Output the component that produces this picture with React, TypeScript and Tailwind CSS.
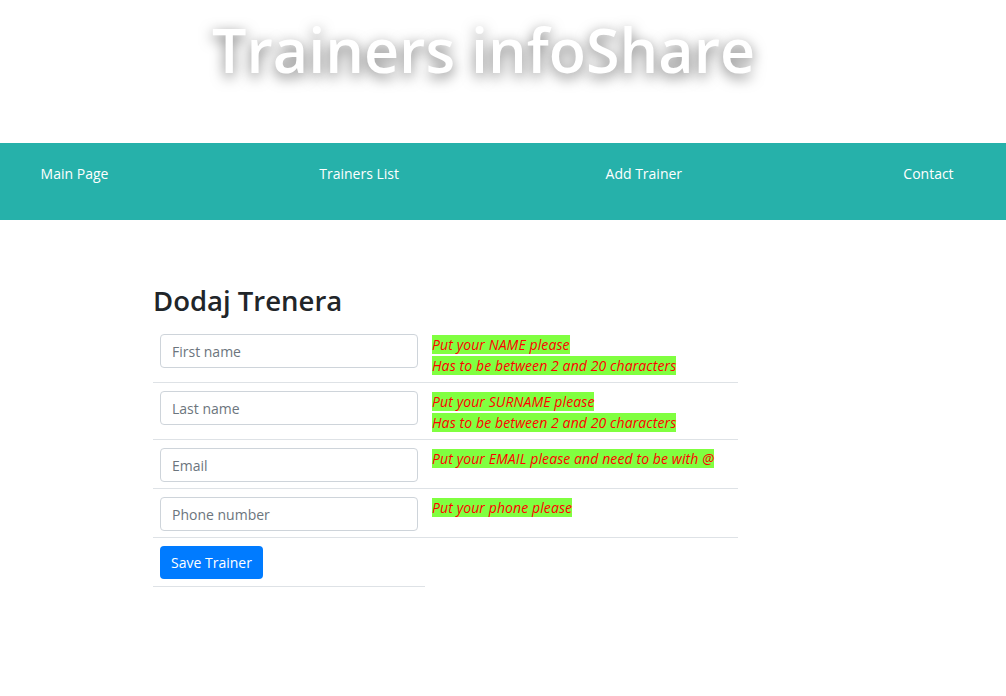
import React from "react";

const navLinks = ["Main Page", "Trainers List", "Add Trainer", "Contact"];

type Field = { placeholder: string; messages: string[] };

const fields: Field[] = [
  {
    placeholder: "First name",
    messages: ["Put your NAME please", "Has to be between 2 and 20 characters"],
  },
  {
    placeholder: "Last name",
    messages: ["Put your SURNAME please", "Has to be between 2 and 20 characters"],
  },
  { placeholder: "Email", messages: ["Put your EMAIL please and need to be with @"] },
  { placeholder: "Phone number", messages: ["Put your phone please"] },
];

const font = "font-['Open_Sans',sans-serif]";

const Header: React.FC = () => (
  <header className="h-[143px] pl-[212px] pt-[10px]">
    <h1 className="text-[61px] leading-[80px] font-semibold text-white [text-shadow:0_4px_14px_rgba(0,0,0,0.55)]">
      Trainers infoShare
    </h1>
  </header>
);

const Nav: React.FC = () => (
  <nav className="h-[77px] bg-[#26b1aa]">
    <ul className="flex justify-between pr-[3px] pt-[20px]">
      {navLinks.map(name => (
        <li key={name} className="w-[149px] text-center text-[14px] leading-[21px] text-white">
          {name}
        </li>
      ))}
    </ul>
  </nav>
);

const TrainerForm: React.FC = () => (
  <section className="ml-[153px] pt-[64px]">
    <h2 className="text-[27.5px] leading-[34px] font-semibold text-[#212529] mb-[8px]">Dodaj Trenera</h2>
    <table className="border-collapse">
      <tbody>
        {fields.map(field => (
          <tr key={field.placeholder} className="border-b border-[#dee2e6]">
            <td className="w-[272px] pl-[7px] pr-[7px] pt-[8px] pb-[6px] align-top">
              <input
                placeholder={field.placeholder}
                className="block w-[258px] h-[34px] px-[11px] rounded-[4px] border border-[#ced4da] text-[14px] text-[#495057] placeholder:text-[#6c757d] outline-none"
              />
            </td>
            <td className="w-[313px] pl-[7px] pr-[4px] pt-[8px] pb-[6px] align-top">
              {field.messages.map((msg, i) => (
                <div key={i} className="leading-[21px]">
                  <span className="bg-[#80ff40] text-[#ff0000] italic text-[14px] tracking-[0.1px]">{msg}</span>
                </div>
              ))}
            </td>
          </tr>
        ))}
        <tr>
          <td className="w-[272px] pl-[7px] pt-[8px] pb-[7px] border-b border-[#dee2e6]">
            <button
              type="button"
              className="block h-[33px] w-[103px] rounded-[4px] bg-[#007bff] text-white text-[14px]"
            >
              Save Trainer
            </button>
          </td>
          <td />
        </tr>
      </tbody>
    </table>
  </section>
);

export default function App() {
  return (
    <div className={`${font} min-h-[696px] bg-white`}>
      <Header />
      <Nav />
      <TrainerForm />
    </div>
  );
}
